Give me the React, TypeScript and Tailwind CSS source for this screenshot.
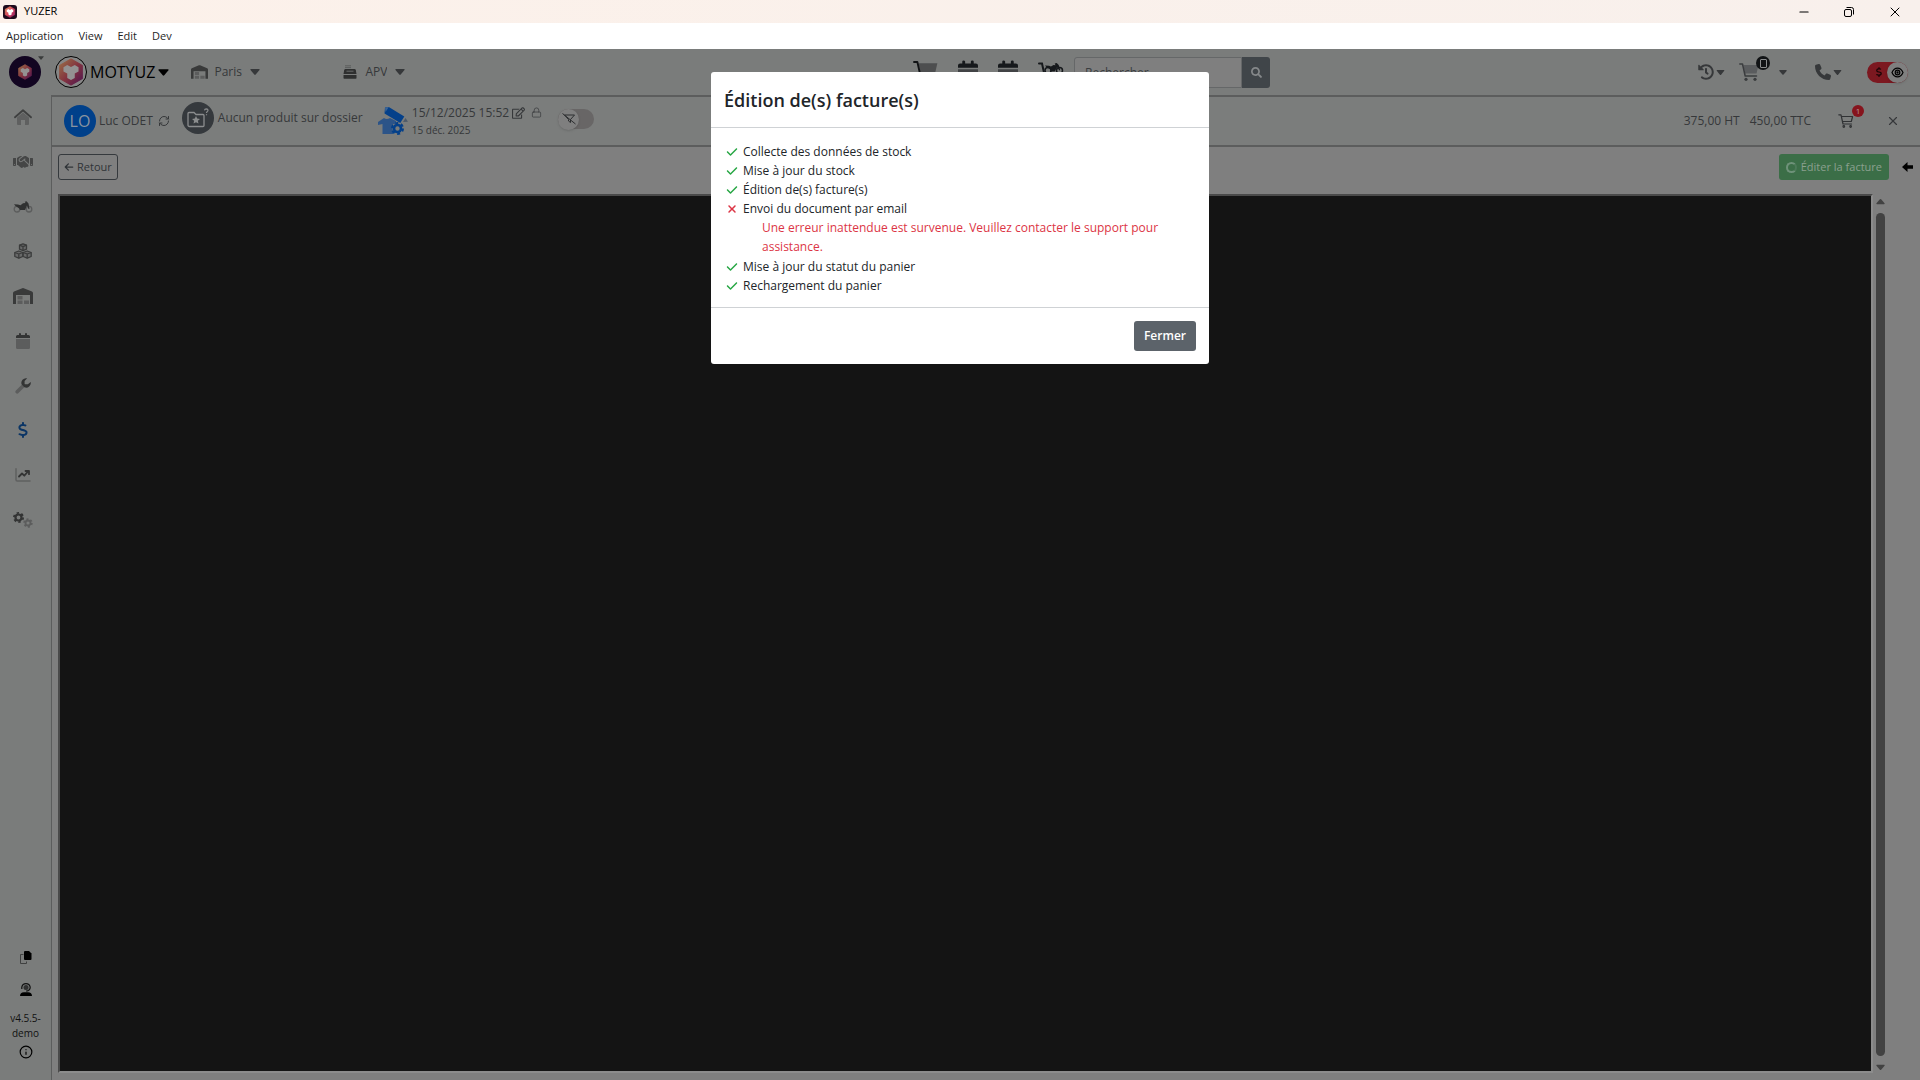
import { ReactNode } from 'react';
import { FaCheck, FaDollarSign, FaArrowLeft, FaPhone, FaXmark, FaHandshake } from 'react-icons/fa6';
import { FaHistory, FaSearch, FaRegEdit } from 'react-icons/fa';
import { Info, RefreshCw, Lock, X, Minus } from 'lucide-react';

const steps = [
  { label: 'Collecte des données de stock', ok: true },
  { label: 'Mise à jour du stock', ok: true },
  { label: 'Édition de(s) facture(s)', ok: true },
  {
    label: 'Envoi du document par email',
    ok: false,
    error: 'Une erreur inattendue est survenue. Veuillez contacter le support pour assistance.'
  },
  { label: 'Mise à jour du statut du panier', ok: true },
  { label: 'Rechargement du panier', ok: true }
];

const Caret = ({ className = 'w-[10px] h-[6px]' }: { className?: string }) => (
  <svg viewBox="0 0 10 6" className={`${className} shrink-0 pointer-events-none`} fill="currentColor" aria-hidden="true">
    <path d="M1 0h8q1 .2.5 1L5.7 5.6q-.7.6-1.4 0L.5 1Q0 .2 1 0z" />
  </svg>
);

const Logo = ({ className, id, dim }: { className: string; id: string; dim?: boolean }) => (
  <svg viewBox="0 0 24 26" className={className} aria-hidden="true">
    <defs>
      <linearGradient id={id} x1="0" y1="0" x2="1" y2="1">
        <stop offset="0" stopColor={dim ? '#9a7148' : '#e89a62'} />
        <stop offset=".5" stopColor={dim ? '#84343f' : '#d8475f'} />
        <stop offset="1" stopColor={dim ? '#4f1450' : '#8a1c66'} />
      </linearGradient>
    </defs>
    <path d="M12 1 22.5 7v12L12 25 1.5 19V7z" fill={`url(#${id})`} strokeLinejoin="round" stroke={`url(#${id})`} />
    <path
      d="M8.5 6.5 12 8.4l3.500-1.900 3.500 2v4l-3.500 2v4L12 20.500l-3.500-2v-4l-3.500-2v-4z"
      fill={dim ? '#949292' : '#ffffff'}
      strokeLinejoin="round"
    />
  </svg>
);

const HomeIcon = () => (
  <svg viewBox="0 0 18 16" className="w-[18px] h-4" aria-hidden="true">
    <path d="M3 8.500 9 3.400l6 5.100V15q0 1-1 1h-3v-5H7v5H4q-1 0-1-1z" fill="#5f6060" />
    <path d="M1 8.300 9 1.300l8 7" fill="none" stroke="#3f4040" strokeWidth="1.800" strokeLinecap="round" strokeLinejoin="round" />
  </svg>
);

const BikeIcon = () => (
  <svg viewBox="0 0 20 12" className="w-5 h-3" aria-hidden="true">
    <circle cx="4" cy="8.200" r="2.800" fill="none" stroke="#5c5d5d" strokeWidth="1.300" />
    <circle cx="16" cy="8.200" r="2.800" fill="none" stroke="#5c5d5d" strokeWidth="1.300" />
    <path d="M1 3.300 5 3.600 7.500 4.200 10 2.300l2.500-.3L11.800.8 13.500.3l2 2.200 1 5.200-1 .3-1.500-3.500-2 4.500H7L6 7.200 2.500 5z" fill="#303131" />
  </svg>
);

const CartBikeIcon = () => (
  <svg viewBox="0 0 26 20" className="w-[26px] h-5" aria-hidden="true">
    <path d="M1 1.500h3L6.500 13H22" fill="none" stroke="#16191c" strokeWidth="2" strokeLinecap="round" />
    <circle cx="10" cy="8.500" r="3" fill="none" stroke="#16191c" strokeWidth="1.500" />
    <circle cx="21.500" cy="8.500" r="3" fill="none" stroke="#16191c" strokeWidth="1.500" />
    <path d="m7 3.500 4 .3 2 .7 2.500-1.500 2 .2-.8-1.700 2-.5 2 2 1.500 5-1 .5-2-3.500-2.500 4.500h-4L12 7 8.500 5.300z" fill="#16191c" />
    <circle cx="9" cy="17.500" r="2" fill="#16191c" />
    <circle cx="20" cy="17.500" r="2" fill="#16191c" />
  </svg>
);

const BoxesIcon = () => (
  <svg viewBox="0 0 18 16" className="w-[18px] h-4" fill="#686969" stroke="#3b3c3c" strokeWidth="1.300" strokeLinejoin="round" aria-hidden="true">
    <path d="M9 .8 12.500 2.200v4L9 7.600 5.500 6.200v-4z" />
    <path d="M5.500 2.200 9 3.700l3.500-1.500M9 3.700v3.900" />
    <path d="M4.800 8 8.800 9.500v4L4.800 15.200.8 13.500v-4z" />
    <path d="M.8 9.500 4.800 11l4-1.500M4.800 11v4.200" />
    <path d="m13.200 8 4 1.500v4l-4 1.700-4-1.700v-4z" />
    <path d="m9.200 9.500 4 1.500 4-1.500M13.200 11v4.200" />
  </svg>
);

const WarehouseIcon = ({ className = 'w-5 h-4' }: { className?: string }) => (
  <svg viewBox="0 0 20 16" className={className} aria-hidden="true">
    <path d="M0 16V5q0-1 1-1.500L9.300.2q.7-.3 1.400 0L19 3.500q1 .5 1 1.500v11h-3V7H3v9z" fill="#393a3a" />
    <path d="M4.500 8h5v3.500h-5zM4.500 12.500h5V16h-5zM11 12.500h5V16h-5z" fill="#5c5d5d" />
  </svg>
);

const CalendarIcon = ({ className = 'w-[14px] h-4', light = '#5c5d5d', dark = '#333434' }) => (
  <svg viewBox="0 0 14 16" className={className} aria-hidden="true">
    <path d="M0 6h14v8.500q0 1.500-1.500 1.500h-11Q0 16 0 14.500z" fill={light} />
    <path d="M0 5V3.500Q0 2 1.500 2H3V.7q0-.7.9-.7T5 .7V2h4V.7q0-.7 1-.7t1 .7V2h1.500Q14 2 14 3.500V5z" fill={dark} />
  </svg>
);

const WrenchIcon = () => (
  <svg viewBox="0 0 16 16" className="w-4 h-4" aria-hidden="true">
    <path d="M2.200 13.800 8.500 7.500" stroke="#5c5d5d" strokeWidth="3.600" strokeLinecap="round" />
    <path
      d="M15.700 3.900a4.700 4.700 0 0 1-6.300 5.400L6.700 6.600A4.700 4.700 0 0 1 12.200.3L9.600 2.900v3.300h3.300z"
      fill="#333434"
    />
  </svg>
);

const ChartIcon = () => (
  <svg viewBox="0 0 16 14" className="w-4 h-[14px]" fill="none" strokeLinecap="round" strokeLinejoin="round" aria-hidden="true">
    <path d="M1 .8v11q0 1.200 1.200 1.200H15" stroke="#5f6060" strokeWidth="1.500" />
    <path d="m4 8.500 3-3 2.300 2.200L13 3.500M10.500 3H14v3.200" stroke="#333434" strokeWidth="1.800" />
  </svg>
);

const GearsIcon = () => (
  <svg viewBox="0 0 20 16" className="w-5 h-4" fill="none" aria-hidden="true">
    <circle cx="5.500" cy="5.500" r="3" stroke="#333434" strokeWidth="2.200" />
    <circle cx="5.500" cy="5.500" r="4.600" stroke="#333434" strokeWidth="1.800" strokeDasharray="2.400 2.410" />
    <circle cx="15" cy="11" r="2.500" stroke="#5c5d5d" strokeWidth="1.800" />
    <circle cx="15" cy="11" r="3.900" stroke="#5c5d5d" strokeWidth="1.600" strokeDasharray="2 2.080" />
  </svg>
);

const CartIcon = ({ className, fill = '#5a5c5e', stroke = '#3a3c3e' }: { className: string; fill?: string; stroke?: string }) => (
  <svg viewBox="0 0 20 18" className={className} aria-hidden="true">
    <path d="M4.500 2H19.500L17.500 10.500H6z" fill={fill} />
    <path d="M.8 1h2.700l2.700 12H17.500" fill="none" stroke={stroke} strokeWidth="1.500" strokeLinecap="round" strokeLinejoin="round" />
    <circle cx="7" cy="16.300" r="1.600" fill={stroke} />
    <circle cx="16" cy="16.300" r="1.600" fill={stroke} />
  </svg>
);

const OutlineCartIcon = () => (
  <svg viewBox="0 0 16 14" className="w-4 h-[14px]" fill="none" stroke="#303234" strokeWidth="1.200" strokeLinecap="round" strokeLinejoin="round" aria-hidden="true">
    <path d="M.8.800h2.200l2 9.200h8.500M3.600 2.500h11L13.300 7.500H4.600" />
    <circle cx="5.800" cy="12.500" r=".8" />
    <circle cx="12.600" cy="12.500" r=".8" />
  </svg>
);

const TillIcon = () => (
  <svg viewBox="0 0 14 14" className="w-[14px] h-[14px]" aria-hidden="true">
    <path d="M2 .8h6M2 2.600h6" stroke="#5c5d5d" />
    <path d="M2.500 4h9q1 0 1.300 1l.7 4H.5l.7-4q.3-1 1.300-1z" fill="#2f3030" />
    <path d="M.5 10h13v3q0 .8-.8.8H1.300q-.8 0-.8-.8z" fill="#2f3030" />
    <path d="M3.500 6.200h7" stroke="#686969" />
  </svg>
);

const FolderIcon = () => (
  <svg viewBox="0 0 32 32" className="w-8 h-8" aria-hidden="true">
    <circle cx="16" cy="16" r="16" fill="#35393d" />
    <path d="M6 11.500q0-1 1-1h5l2 2H21q1 0 1 1v10q0 1-1 1H7.500Q6 24.500 6 23z" fill="none" stroke="#8b8d8e" strokeWidth="1.300" />
    <path d="m14 14 1.200 2.600 2.800.3-2.100 1.900.6 2.800-2.500-1.400-2.500 1.400.6-2.800-2.100-1.900 2.800-.3z" fill="#8b8d8e" />
    <path d="M22.500 8.300q.2-1.500 1.800-1.500 1.700.1 1.700 1.500 0 .9-.9 1.400-.6.400-.6 1.200M24.500 12.300v1" fill="none" stroke="#8b8d8e" strokeWidth="1.200" />
  </svg>
);

const WorkshopIcon = () => (
  <svg viewBox="0 0 32 30" className="w-8 h-[30px]" aria-hidden="true">
    <path d="m1 16 6-4q2.500 2 6 0l6 3v4l-3-1v10H5.500V18L1 19z" fill="#2c5488" />
    <path d="m8 1.500 3.800-.5 15.500 9.500-4 6.500L7.500 7.500z" fill="#04408a" />
    <path d="m8 1.500 3.800-.5-3.300 5z" fill="#3d6596" />
    <path d="m28.500 12 2.500 3.700-5 .3z" fill="#4e5a69" />
    <circle cx="20.500" cy="22.500" r="5" fill="#7b7d7c" />
    <circle cx="20.500" cy="22.500" r="3.500" fill="none" stroke="#04408a" strokeWidth="2.600" />
    <circle cx="20.500" cy="22.500" r="5.500" fill="none" stroke="#04408a" strokeWidth="2" strokeDasharray="3 2.760" />
  </svg>
);

const CopyIcon = () => (
  <svg viewBox="0 0 12 13" className="w-3 h-[13px]" aria-hidden="true">
    <path d="M3.500 3.500h-3v9h6v-2" fill="none" stroke="#3f4040" />
    <path d="M5 0h4l2.500 2.500V8q0 1-1 1H5Q4 9 4 8V1q0-1 1-1z" fill="#000" />
  </svg>
);

const SupportIcon = () => (
  <svg viewBox="0 0 12 13" className="w-3 h-[13px]" aria-hidden="true">
    <circle cx="6" cy="4.500" r="2.500" fill="#303131" />
    <path d="M1.800 6V4.200Q2.500.7 6 .7t4.200 3.500q0 3.300-4 4" fill="none" stroke="#111" strokeWidth="1.200" />
    <path d="M0 13q0-3.500 4-3.800h4q4 .3 4 3.800z" fill="#000" />
  </svg>
);

const navItems: { id: string; label: string; icon: ReactNode }[] = [
  { id: 'home', label: 'Accueil', icon: <HomeIcon /> },
  { id: 'deals', label: 'Ventes', icon: <FaHandshake className="w-5 h-4 text-[#454646]" /> },
  { id: 'bikes', label: 'Véhicules', icon: <BikeIcon /> },
  { id: 'stock', label: 'Stock', icon: <BoxesIcon /> },
  { id: 'warehouse', label: 'Entrepôt', icon: <WarehouseIcon /> },
  { id: 'calendar', label: 'Agenda', icon: <CalendarIcon /> },
  { id: 'workshop', label: 'Atelier', icon: <WrenchIcon /> },
  { id: 'billing', label: 'Facturation', icon: <FaDollarSign className="w-4 h-4 text-[#0b3565]" /> },
  { id: 'stats', label: 'Statistiques', icon: <ChartIcon /> },
  { id: 'settings', label: 'Paramètres', icon: <GearsIcon /> }
];

const WindowBar = () => (
  <div>
    <div className="h-[23px] flex items-center justify-between bg-gradient-to-r from-[#fcf1ea] to-[#f8f0ec] pl-[3px] pr-[17px] text-black">
      <div className="flex items-center gap-[7px]">
        <span className="w-[14px] h-[14px] rounded-[3px] bg-[#1d0a1c] flex items-center justify-center">
          <Logo id="logo-window" className="w-3 h-3" />
        </span>
        <span className="text-[11px]">YUZER</span>
      </div>
      <div className="flex items-center gap-[33px]">
        <button aria-label="Réduire"><Minus className="w-[14px] h-[14px]" strokeWidth={2} /></button>
        <button aria-label="Restaurer">
          <svg viewBox="0 0 10 10" className="w-[10px] h-[10px]" fill="none" stroke="currentColor">
            <rect x=".5" y="2.500" width="7" height="7" rx="1.500" />
            <path d="M2.500.5H7.500Q9.500.5 9.500 2.500v5" />
          </svg>
        </button>
        <button aria-label="Fermer la fenêtre"><X className="w-4 h-4" strokeWidth={1.5} /></button>
      </div>
    </div>
    <div className="h-[26px] flex items-center gap-[15px] bg-white px-[6px] text-[11px] text-[#1f1f1f]">
      {['Application', 'View', 'Edit', 'Dev'].map(item => (
        <button key={item}>{item}</button>
      ))}
    </div>
  </div>
);

const Sidebar = () => (
  <aside className="w-[51px] shrink-0 flex flex-col justify-between bg-[#7a7c7b]">
    <nav className="h-[447px] flex flex-col items-center pr-[6px]">
      {navItems.map(item => (
        <a key={item.id} href={`#${item.id}`} aria-label={item.label} className="flex-1 flex items-center">
          {item.icon}
        </a>
      ))}
    </nav>
    <div className="flex flex-col items-center pb-[21px] text-black">
      <button aria-label="Copier" className="mb-[19px]"><CopyIcon /></button>
      <button aria-label="Support" className="mb-[15px]"><SupportIcon /></button>
      <span className="text-[10px] leading-[15px] text-center text-[#111]">v4.5.5-<br />demo</span>
      <button aria-label="Informations" className="mt-1"><Info className="w-[14px] h-[14px]" /></button>
    </div>
  </aside>
);

const TopBar = () => (
  <header className="h-[46px] shrink-0 flex items-center bg-[#7a7c7b] text-[#36383a] text-xs">
    <button aria-label="Yuzer" className="relative ml-[9px] w-8 h-8 rounded-full bg-[#120521] flex items-center justify-center">
      <Logo id="logo-app" className="w-4 h-4" dim />
      <Caret className="absolute left-[29px] top-0 w-[6px] h-1 text-[#3a3c3c]" />
    </button>
    <button className="ml-[14px] flex items-center text-base text-black">
      <span className="w-8 h-8 rounded-full border border-black bg-[#868686] flex items-center justify-center mr-[3px]">
        <Logo id="logo-brand" className="w-7 h-7" dim />
      </span>
      MOTYUZ
      <Caret className="ml-[3px] w-[11px] h-[7px]" />
    </button>
    <label className="ml-[22px] w-[152px] flex items-center">
      <WarehouseIcon className="w-[17px] h-[14px] mr-[6px]" />
      <select aria-label="Site" className="appearance-none bg-transparent outline-none mr-2">
        <option>Paris</option>
      </select>
      <Caret />
    </label>
    <label className="flex items-center">
      <span className="mr-2"><TillIcon /></span>
      <select aria-label="Service" className="appearance-none bg-transparent outline-none mr-2">
        <option>APV</option>
      </select>
      <Caret />
    </label>

    <div className="flex-1 flex items-center justify-end">
      <div className="flex items-center gap-5 mr-[10px]">
        <CartIcon className="w-[25px] h-6" fill="#4d4e4f" stroke="#111315" />
        <CalendarIcon className="w-5 h-6" light="#414345" dark="#16191c" />
        <CalendarIcon className="w-5 h-6" light="#414345" dark="#16191c" />
        <CartBikeIcon />
      </div>
      <input
        type="text"
        aria-label="Rechercher"
        placeholder="Rechercher"
        className="w-[168px] h-[31px] border border-[#656768] bg-[#7f7f7f] rounded-l-[3px] px-[10px] text-xs placeholder:text-[#393d40] outline-none"
      />
      <button aria-label="Lancer la recherche" className="w-7 h-[31px] rounded-r-[3px] bg-[#404549] text-[#85888a] flex items-center justify-center">
        <FaSearch className="w-[11px] h-[11px]" />
      </button>
    </div>

    <div className="w-[650px] shrink-0 flex items-center justify-end pr-3">
      <button aria-label="Historique" className="flex items-center gap-[2px]">
        <FaHistory className="w-4 h-4" />
        <Caret className="w-[9px] h-[5px]" />
      </button>
      <button aria-label="Panier" className="relative ml-[14px] flex items-center">
        <CartIcon className="w-5 h-[18px]" />
        <span className="absolute left-[17px] -top-[7px] w-[14px] h-[14px] rounded-full bg-[#111315] flex items-center justify-center">
          <span className="w-[7px] h-[9px] rounded-[1px] border border-[#8a8c8d]" />
        </span>
        <Caret className="ml-5 w-[8px] h-[5px]" />
      </button>
      <button aria-label="Téléphone" className="ml-7 flex items-center gap-[2px]">
        <FaPhone className="w-4 h-4" />
        <Caret className="w-[9px] h-[5px]" />
      </button>
      <label className="ml-[25px] w-[41px] h-[21px] rounded-full bg-[#7c1820] flex items-center justify-end cursor-pointer">
        <input type="checkbox" defaultChecked aria-label="Afficher les prix" className="sr-only" />
        <FaDollarSign className="w-[10px] h-[10px] text-[#1b0507] mr-[3px]" />
        <span className="w-[21px] h-[21px] rounded-full bg-[#7f7f7f] shadow flex items-center justify-center">
          <svg viewBox="0 0 14 12" className="w-[13px] h-[11px]" fill="none" stroke="#000" strokeWidth="1.300">
            <path d="M1 6Q3 1.300 7 1.300T13 6q-2 4.700-6 4.700T1 6z" />
            <circle cx="7" cy="6" r="2.500" />
            <circle cx="7" cy="6" r=".6" />
          </svg>
        </span>
      </label>
    </div>
  </header>
);

const FolderBar = () => (
  <div className="h-[52px] shrink-0 flex items-center justify-between border-y-2 border-[#5c5d5d] bg-[#7b7d7c] pl-3 pr-5 text-[#36383a] text-xs">
    <div className="flex items-center">
      <span className="w-8 h-8 rounded-full bg-[#00408a] text-[#8a94a0] text-base flex items-center justify-center mr-[3px]">LO</span>
      <span>Luc ODET</span>
      <button aria-label="Actualiser" className="ml-[5px]"><RefreshCw className="w-3 h-3" /></button>
      <span className="ml-3 mb-[6px] w-[195px] flex items-center gap-1">
        <FolderIcon />
        <span>Aucun produit sur dossier</span>
      </span>
      <WorkshopIcon />
      <div className="ml-[3px]">
        <div className="flex items-center gap-[3px] leading-[18px]">
          15/12/2025 15:52
          <button aria-label="Modifier la date"><FaRegEdit className="w-[13px] h-3" /></button>
          <Lock className="w-[11px] h-[11px] ml-[3px]" strokeWidth={1.5} />
        </div>
        <div className="text-[10px] leading-[17px]">15 déc. 2025</div>
      </div>
      <label className="ml-4 mb-1 w-9 h-5 rounded-full bg-[#686666] flex items-center cursor-pointer">
        <input type="checkbox" aria-label="Filtrer" className="sr-only" />
        <span className="w-[21px] h-[21px] rounded-full bg-[#7f7f7f] shadow flex items-center justify-center">
          <svg viewBox="0 0 14 12" className="w-[14px] h-3" fill="none" stroke="#2c2e30">
            <path d="M2.500 2h10L8.500 6.500v3l-2-1.500V6.500zM.5.500l13 10.500" />
          </svg>
        </span>
      </label>
    </div>
    <div className="flex items-center">
      <span>375,00 HT</span>
      <span className="ml-[10px]">450,00 TTC</span>
      <button aria-label="Panier du dossier" className="relative ml-[27px]">
        <OutlineCartIcon />
        <span className="absolute left-[14px] -top-[9px] w-3 h-3 rounded-full bg-[#86141d] text-[#b59a9c] text-[8px] leading-[12px] text-center">1</span>
      </button>
      <button aria-label="Fermer le dossier" className="ml-8"><X className="w-[14px] h-[14px]" strokeWidth={2} /></button>
    </div>
  </div>
);

const Workspace = () => (
  <main className="flex-1 min-h-0 flex flex-col bg-[#7f7f7f]">
    <div className="flex items-center justify-between py-[7px] pl-[6px] pr-[7px]">
      <button className="h-[26px] flex items-center gap-[3px] border border-[#35393d] rounded-[3px] px-[5px] text-[11px] text-[#303438]">
        <FaArrowLeft className="w-[10px] h-[10px]" />
        Retour
      </button>
      <div className="flex items-center gap-[13px]">
        <button className="h-[26px] flex items-center gap-1 rounded-[3px] bg-[#3b6e47] px-[7px] text-[11px] text-[#8ba08f]">
          <span className="w-[11px] h-[11px] rounded-full border-2 border-[#6f927a] border-r-[#4c7a58]" />
          Éditer la facture
        </button>
        <svg viewBox="0 0 11 10" className="w-[11px] h-[10px]" aria-hidden="true">
          <path d="M0 5 5.500 0v3.300H11v3.400H5.500V10z" fill="#000" />
        </svg>
      </div>
    </div>
    <div className="flex-1 min-h-0 flex pt-[7px] pl-[6px] pr-[35px] pb-[7px]">
      <div className="flex-1 bg-[#141414] border-2 border-t-[#4a4a4a] border-l-[#4a4a4a] border-r-[#8c8c8c] border-b-[#8c8c8c]" />
      <div className="w-3 flex flex-col items-end justify-between pt-1 pb-[2px] text-[#424242]">
        <Caret className="w-[9px] h-[7px] rotate-180" />
        <div className="flex-1 my-2 w-[9px] rounded-full bg-[#424242]" />
        <Caret className="w-[9px] h-[7px]" />
      </div>
    </div>
  </main>
);

const InvoiceModal = () => (
  <div
    role="dialog"
    aria-modal="true"
    aria-labelledby="modal-title"
    className="absolute left-1/2 top-[72px] -translate-x-1/2 w-[498px] rounded-[3px] bg-white text-[#212529] text-xs"
  >
    <div className="h-14 flex items-center px-[13px] border-b border-[#cfd2d5]">
      <h5 id="modal-title" className="text-lg font-semibold">Édition de(s) facture(s)</h5>
    </div>
    <ul className="px-[14px] pt-[14px] pb-3 leading-[19px]">
      {steps.map(step => (
        <li key={step.label}>
          <div className="flex items-center gap-1">
            <span className="w-[14px] flex justify-center">
              {step.ok ? <FaCheck className="w-3 h-3 text-[#28a745]" /> : <FaXmark className="w-3 h-3 text-[#dc3545]" />}
            </span>
            {step.label}
          </div>
          {step.error && <p className="mb-px pl-[37px] pr-6 text-[#dc3545]">{step.error}</p>}
        </li>
      ))}
    </ul>
    <div className="flex justify-end px-[13px] py-[13px] border-t border-[#cfd2d5]">
      <button className="h-[30px] px-[10px] rounded-[3px] bg-[#5c636a] text-white font-semibold">Fermer</button>
    </div>
  </div>
);

export default function App() {
  return (
    <div className="relative h-screen flex flex-col overflow-hidden font-['Open_Sans','Noto_Sans',sans-serif]">
      <WindowBar />
      <TopBar />
      <div className="flex-1 min-h-0 flex bg-[#7a7c7b]">
        <Sidebar />
        <div className="flex-1 min-w-0 flex flex-col border-l border-[#5c5d5d]">
          <FolderBar />
          <Workspace />
        </div>
      </div>
      <InvoiceModal />
    </div>
  );
}
